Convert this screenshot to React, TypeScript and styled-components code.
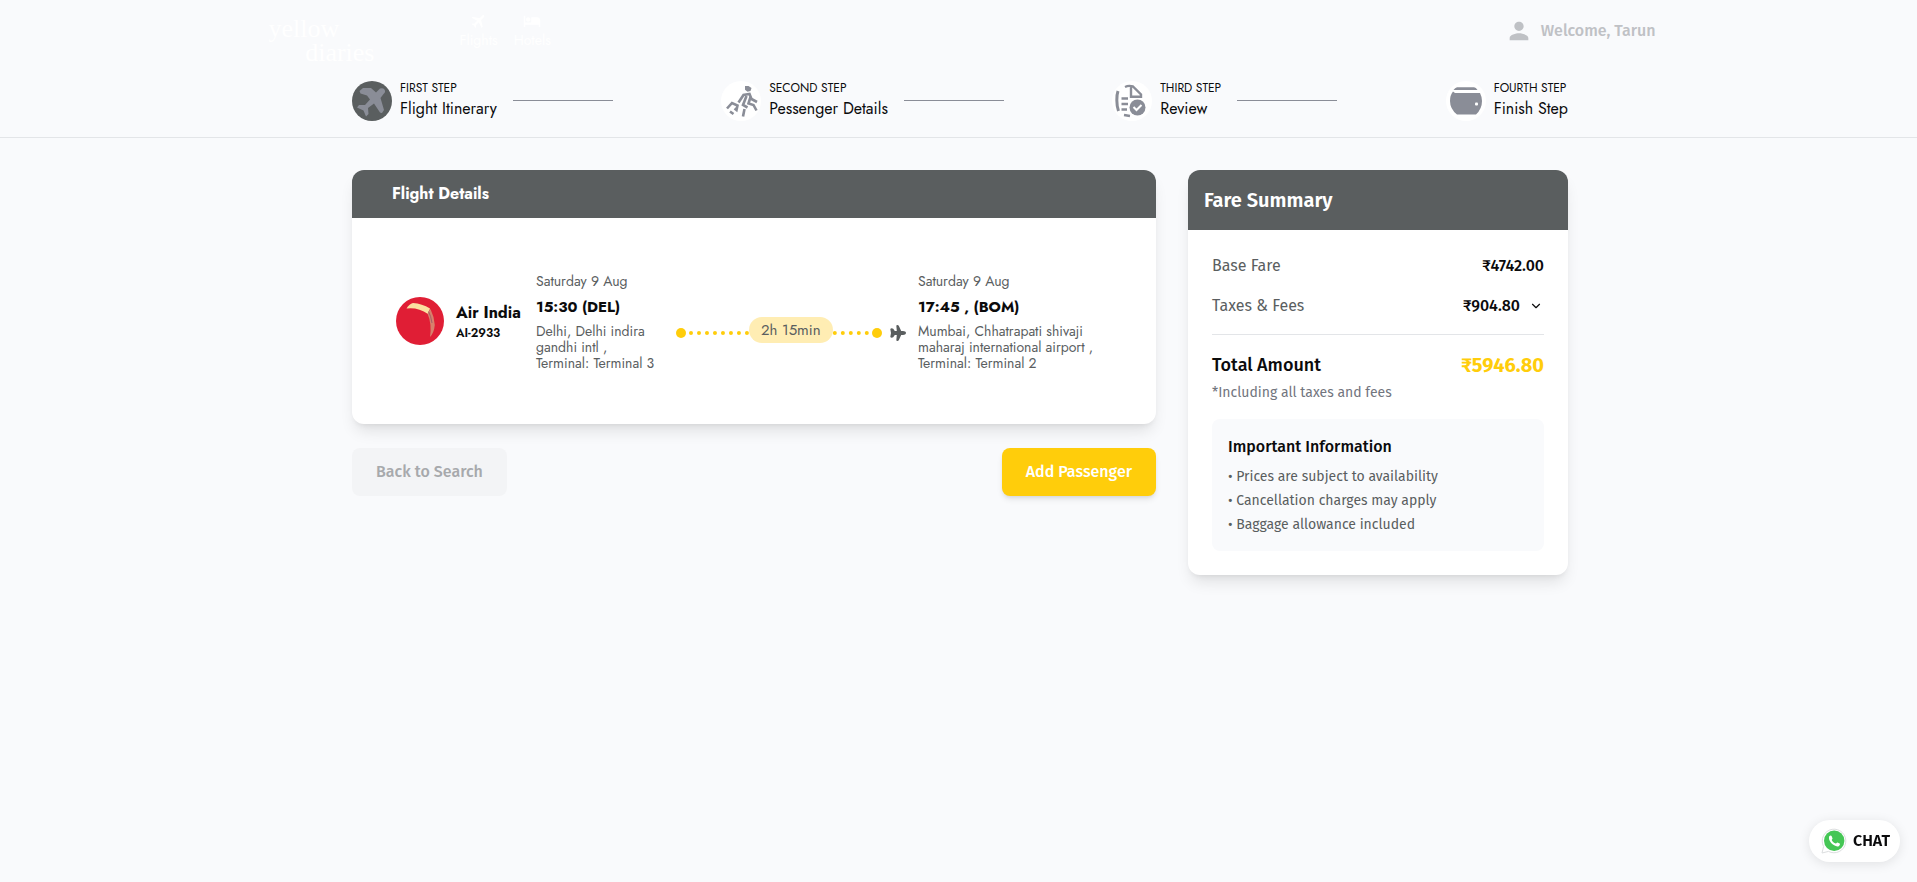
import React from 'react';
import styled, { createGlobalStyle } from 'styled-components';
import { ChevronDown } from 'lucide-react';
import { MdFlight, MdHotel, MdPerson } from 'react-icons/md';

const sans = `'Fira Sans', 'Open Sans', 'Noto Sans', sans-serif`;
const geometric = `Jost, Lato, 'Open Sans', sans-serif`;
const slate = '#5a5e5f';
const muted = '#8a8d97';
const yellow = '#ffcd0b';

const GlobalStyle = createGlobalStyle`
  *, *::before, *::after { box-sizing: border-box; }
  body { margin: 0; background: #f9fafc; color: #0b0b0c; font-family: ${sans}; font-size: 16px; line-height: 24px; }
  h1, h2, h3, p, ul, ol { margin: 0; padding: 0; }
  ul, ol { list-style: none; }
  button { font: inherit; border: 0; cursor: pointer; }
`;

const Header = styled.header`
  display: flex;
  align-items: flex-start;
  max-width: 1394px;
  height: 64px;
  margin: 0 auto;
  padding-left: 7px;
`;

const Logo = styled.a`
  display: flex;
  flex-direction: column;
  width: 106px;
  margin-top: 17px;
  color: #fff;
  font: 26px/24px 'Liberation Serif', serif;
  text-decoration: none;
  span:last-child { align-self: flex-end; }
`;

const MainNav = styled.nav`
  display: flex;
  gap: 16px;
  margin: 12px 0 0 85px;
`;

const NavLink = styled.a<{ $tilted?: boolean }>`
  display: flex;
  flex-direction: column;
  align-items: center;
  color: #fff;
  font: 14px/20px ${geometric};
  text-decoration: none;
  svg { width: 18px; height: 18px; transform: rotate(${p => (p.$tilted ? 45 : 0)}deg); }
`;

const Account = styled.div`
  display: flex;
  align-items: center;
  gap: 8px;
  margin: 17px 0 0 auto;
  color: #bfc1c5;
  font-weight: 500;
  line-height: 28px;
`;

const StepsBar = styled.nav`
  padding: 16px 0;
  border-bottom: 1px solid #e3e5e8;
`;

const Container = styled.div`
  max-width: 1283px;
  margin: 0 auto;
  padding: 0 32px 0 35px;
`;

const StepList = styled.ol`
  display: flex;
  justify-content: space-between;
`;

const Step = styled.li`
  display: flex;
  align-items: center;
  font-family: ${geometric};
  &:not(:last-child)::after {
    content: '';
    width: 100px;
    height: 1px;
    margin-left: 16px;
    background: ${muted};
  }
`;

const StepIcon = styled.span<{ $active?: boolean }>`
  display: flex;
  align-items: center;
  justify-content: center;
  width: 40px;
  height: 40px;
  margin-right: 8px;
  border-radius: 50%;
  background: ${p => (p.$active ? slate : '#fff')};
  color: ${muted};
`;

const StepOrder = styled.p`
  margin-bottom: 1px;
  font-size: 12px;
  line-height: 16px;
  text-transform: uppercase;
`;

const StepName = styled.p`
  font-size: 16px;
  line-height: 24px;
`;

const Content = styled.main`
  display: grid;
  grid-template-columns: minmax(0, 1fr) 380px;
  gap: 32px;
  align-items: start;
  padding: 32px 0;
`;

const Card = styled.section`
  overflow: hidden;
  border-radius: 12px;
  background: #fff;
  box-shadow: 0 10px 15px -3px rgba(0, 0, 0, 0.1), 0 4px 6px -4px rgba(0, 0, 0, 0.1);
`;

const FlightTitle = styled.h2`
  padding: 0 40px;
  background: ${slate};
  color: #fff;
  font: 700 16px/48px ${geometric};
`;

const FareTitle = styled.h2`
  padding: 0 16px;
  background: ${slate};
  color: #fff;
  font-size: 20px;
  font-weight: 600;
  line-height: 60px;
`;

const Flight = styled.div`
  display: flex;
  align-items: center;
  padding: 53px 44px;
  font-family: ${geometric};
`;

const Airline = styled.div`
  display: flex;
  align-items: center;
  gap: 12px;
  flex: 0 0 140px;
  white-space: nowrap;
`;

const AirlineName = styled.p`
  font-size: 16px;
  font-weight: 700;
  line-height: 24px;
`;

const FlightNumber = styled.p`
  font-size: 12px;
  font-weight: 600;
  line-height: 16px;
`;

const Stop = styled.div<{ $width: number }>`
  flex: 0 0 ${p => p.$width}px;
  color: ${slate};
`;

const StopDate = styled.p`
  font-size: 14px;
  line-height: 20px;
`;

const StopTime = styled.p`
  margin: 4px 0;
  color: #0b0b0c;
  font-size: 15px;
  font-weight: 700;
  line-height: 24px;
`;

const StopPlace = styled.p`
  max-width: 180px;
  font-size: 14px;
  line-height: 16px;
`;

const Journey = styled.div`
  display: flex;
  align-items: center;
  flex: 1;
  min-width: 0;
  margin-right: 12px;
  padding-top: 24px;
  color: ${slate};
`;

const Dot = styled.span`
  width: 10px;
  height: 10px;
  border-radius: 50%;
  background: ${yellow};
`;

const Track = styled.div`
  position: relative;
  flex: 1;
  margin: 0 3px;
  border-top: 4px dotted ${yellow};
`;

const Duration = styled.span`
  position: absolute;
  top: -18px;
  left: 33.333%;
  padding: 0 12px;
  border-radius: 13px;
  background: #ffedb3;
  font-size: 15px;
  line-height: 26px;
  white-space: nowrap;
`;

const PlaneSvg = styled.svg`
  flex: none;
  width: 16px;
  height: 16px;
  margin-left: 8px;
`;

const Actions = styled.div`
  display: flex;
  justify-content: space-between;
  margin-top: 24px;
`;

const ActionButton = styled.button<{ $primary?: boolean }>`
  height: 48px;
  padding: 0 24px;
  border-radius: 8px;
  background: ${p => (p.$primary ? yellow : '#f3f4f6')};
  color: ${p => (p.$primary ? '#fff' : '#a7a9ac')};
  font-weight: 500;
  box-shadow: ${p => (p.$primary ? '0 4px 6px -1px rgba(0,0,0,.1), 0 2px 4px -2px rgba(0,0,0,.1)' : 'none')};
`;

const FareBody = styled.div`
  padding: 24px;
`;

const FareRow = styled.div`
  display: flex;
  justify-content: space-between;
  margin-bottom: 16px;
  color: ${slate};
`;

const FareValue = styled.span`
  color: #0b0b0c;
  font-weight: 500;
`;

const TaxToggle = styled.button`
  display: flex;
  align-items: center;
  gap: 9px;
  padding: 0 1px 0 0;
  background: none;
  color: #0b0b0c;
`;

const TotalRow = styled.div`
  display: flex;
  justify-content: space-between;
  padding-top: 16px;
  border-top: 1px solid #e3e5e8;
  font-size: 18px;
  font-weight: 500;
  line-height: 28px;
`;

const TotalValue = styled.span`
  color: ${yellow};
  font-size: 20px;
  font-weight: 700;
`;

const FareNote = styled.p`
  margin: 4px 0 16px;
  color: #72757e;
  font-size: 14px;
  line-height: 20px;
`;

const InfoBox = styled.div`
  padding: 16px;
  border-radius: 8px;
  background: #f9fafc;
`;

const InfoTitle = styled.h3`
  margin-bottom: 8px;
  font-size: 16px;
  font-weight: 500;
`;

const InfoList = styled.ul`
  display: grid;
  gap: 4px;
  color: ${slate};
  font-size: 14px;
  line-height: 20px;
`;

const ChatButton = styled.button`
  position: fixed;
  right: 17px;
  bottom: 20px;
  display: flex;
  align-items: center;
  gap: 6px;
  height: 42px;
  padding: 0 10px 0 12px;
  border-radius: 21px;
  background: #fff;
  color: #0b0b0c;
  font-weight: 600;
  box-shadow: 0 2px 12px rgba(0, 0, 0, 0.1);
`;

const JourneyPlane = () => (
  <PlaneSvg viewBox="0 0 16 16" fill="currentColor" aria-hidden>
    <path d="M16 8C16 9.200 14.500 9.900 13 9.900H11.200L8.800 15.300Q7.500 16.600 6.300 15.500L6.800 10H4.800L3.200 12.300Q1.200 13.200 .3 12L1 8L.3 4Q1.200 2.800 3.200 3.700L4.800 6H6.800L6.300 .5Q7.500 -.6 8.800 .7L11.200 6.100H13C14.500 6.100 16 6.800 16 8z" />
  </PlaneSvg>
);

const FlightIcon = () => (
  <svg width="40" height="40" viewBox="0 0 40 40" fill="currentColor" aria-hidden>
    <path d="M7.500 10L11 7H19L24 11.500L28 7.500Q31 6.500 32.500 8.500Q34 11 31.500 13L28.500 17L32 29L30 32Q28 32.500 27 30L22 22.500L16 27L16.500 33L14 35.500L11.500 29.500L5 26.500L7 24L13 24L18 18.500L15 14.500L8.500 12.500z" />
  </svg>
);

const TravellerIcon = () => (
  <svg width="40" height="40" viewBox="0 0 40 40" fill="none" stroke="currentColor" strokeWidth="2.600" aria-hidden>
    <path d="M24 5l3.500 0l3 2l-1 3l-3 .8l-2.500-2z" fill="currentColor" stroke="none" />
    <path d="M17.500 21.500L22.500 14L28.500 13L30.500 18L36 21" />
    <path d="M25.500 15L22 24L26.500 26.500M29.500 16L27.500 22.500L32.500 24L35.500 29.500M23.500 28L22 35.500" />
    <path d="M6 27.500L11 22L16.500 24.500L15.500 29L13.500 27.500M9 30.500L12.500 33" />
  </svg>
);

const ReviewIcon = () => (
  <svg width="40" height="40" viewBox="0 0 40 40" fill="none" stroke="currentColor" strokeWidth="2.400" aria-hidden>
    <path d="M6 10C4.500 14 4.200 24 6.500 30" strokeWidth="3" />
    <path d="M13 6C15 5 18 4.500 21 5.500L29 13.500V15.800H19V5" />
    <path d="M9.500 17.500H16M9.500 23H16M9.500 28.500H15M12 34L18 35" />
    <circle cx="25.500" cy="26.500" r="8" fill="currentColor" stroke="none" />
    <path d="M21.500 26L24.500 29L29.500 24" stroke="#fff" strokeWidth="2" />
  </svg>
);

const WalletIcon = () => (
  <svg width="40" height="40" viewBox="0 0 40 40" fill="currentColor" aria-hidden>
    <path d="M11 6.300H28Q30 6.300 31.500 9H7.500Q9 7 11 6.300z" />
    <path d="M7 10.500L9 12H34Q36 16 36 20Q36 28 30 33.500H11Q4 28 4 20Q4 14 7 10.500z" />
    <rect x="29" y="21.500" width="3" height="3" rx="1" fill="#fff" />
  </svg>
);

const AirIndiaLogo = () => (
  <svg width="48" height="48" viewBox="0 0 48 48" role="img" aria-label="Air India">
    <circle cx="24" cy="24" r="24" fill="#e01e35" />
    <path d="M10.500 11.500Q13 7 17 6Q26 6.500 34 11.500L32 17Q22 10 10.500 11.500z" fill="#fbe0a0" />
    <path d="M31.500 16.500L34.500 12Q38 19 38.800 28Q38 36 34 40Q36 27 31.500 16.500z" fill="#d8806c" />
    <path d="M32.500 14.500Q35 19 36 26" stroke="#a0606a" fill="none" />
  </svg>
);

const WhatsAppIcon = () => (
  <svg width="26" height="26" viewBox="0 0 26 26" aria-hidden>
    <path d="M1 25L2.600 18.500A11.800 11.800 0 1 1 7.500 23.400z" fill="#fff" stroke="#dcdedf" />
    <circle cx="13.200" cy="12.800" r="10.200" fill="#45c655" />
    <path
      d="M8.200 8.300C9 7.200 10.300 7.200 10.600 8L11.500 10.200C11.700 10.900 10.700 11.500 10.700 12C11.500 13.700 13 15 14.700 15.600C15.300 15.500 15.900 14.400 16.500 14.500L18.700 15.600C19.300 16 18.900 17.600 17.700 18.200C13.500 19.600 6.500 13 8.200 8.300z"
      fill="#fff"
    />
  </svg>
);

const steps = [
  { order: 'First Step', name: 'Flight Itinerary', icon: <FlightIcon />, active: true },
  { order: 'Second Step', name: 'Pessenger Details', icon: <TravellerIcon /> },
  { order: 'Third Step', name: 'Review', icon: <ReviewIcon /> },
  { order: 'Fourth Step', name: 'Finish Step', icon: <WalletIcon /> },
];

const notes = ['Prices are subject to availability', 'Cancellation charges may apply', 'Baggage allowance included'];

export default function App() {
  return (
    <>
      <GlobalStyle />
      <Header>
        <Logo href="#"><span>yellow</span><span>diaries</span></Logo>
        <MainNav>
          <NavLink href="#flights" $tilted><MdFlight />Flights</NavLink>
          <NavLink href="#hotels"><MdHotel />Hotels</NavLink>
        </MainNav>
        <Account><MdPerson size={28} />Welcome, Tarun</Account>
      </Header>

      <StepsBar aria-label="Booking steps">
        <Container>
          <StepList>
            {steps.map(step => (
              <Step key={step.order} aria-current={step.active ? 'step' : undefined}>
                <StepIcon $active={step.active}>{step.icon}</StepIcon>
                <div>
                  <StepOrder>{step.order}</StepOrder>
                  <StepName>{step.name}</StepName>
                </div>
              </Step>
            ))}
          </StepList>
        </Container>
      </StepsBar>

      <Container>
        <Content>
          <div>
            <Card>
              <FlightTitle>Flight Details</FlightTitle>
              <Flight>
                <Airline>
                  <AirIndiaLogo />
                  <div>
                    <AirlineName>Air India</AirlineName>
                    <FlightNumber>AI-2933</FlightNumber>
                  </div>
                </Airline>
                <Stop $width={140}>
                  <StopDate>Saturday 9 Aug</StopDate>
                  <StopTime>15:30 (DEL)</StopTime>
                  <StopPlace>Delhi, Delhi indira<br />gandhi intl ,<br />Terminal: Terminal 3</StopPlace>
                </Stop>
                <Journey>
                  <Dot />
                  <Track><Duration>2h 15min</Duration></Track>
                  <Dot />
                  <JourneyPlane />
                </Journey>
                <Stop $width={194}>
                  <StopDate>Saturday 9 Aug</StopDate>
                  <StopTime>17:45 , (BOM)</StopTime>
                  <StopPlace>Mumbai, Chhatrapati shivaji maharaj international airport ,<br />Terminal: Terminal 2</StopPlace>
                </Stop>
              </Flight>
            </Card>
            <Actions>
              <ActionButton type="button">Back to Search</ActionButton>
              <ActionButton type="button" $primary>Add Passenger</ActionButton>
            </Actions>
          </div>

          <Card>
            <FareTitle>Fare Summary</FareTitle>
            <FareBody>
              <FareRow><span>Base Fare</span><FareValue>₹4742.00</FareValue></FareRow>
              <FareRow>
                <span>Taxes &amp; Fees</span>
                <TaxToggle type="button" aria-expanded={false}>
                  <FareValue>₹904.80</FareValue>
                  <ChevronDown size={14} />
                </TaxToggle>
              </FareRow>
              <TotalRow><span>Total Amount</span><TotalValue>₹5946.80</TotalValue></TotalRow>
              <FareNote>*Including all taxes and fees</FareNote>
              <InfoBox>
                <InfoTitle>Important Information</InfoTitle>
                <InfoList>{notes.map(note => <li key={note}>• {note}</li>)}</InfoList>
              </InfoBox>
            </FareBody>
          </Card>
        </Content>
      </Container>

      <ChatButton type="button"><WhatsAppIcon />CHAT</ChatButton>
    </>
  );
}
